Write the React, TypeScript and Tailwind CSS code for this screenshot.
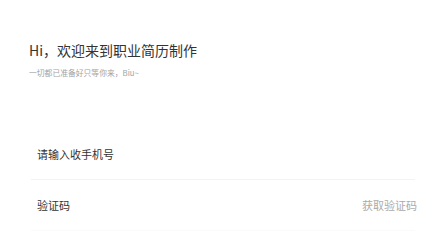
import React from "react";

const font = "font-['Noto_Sans_CJK_SC','Noto_Sans',sans-serif]";

export default function App() {
  return (
    <div className={`w-[445px] h-[248px] bg-white overflow-hidden ${font}`}>
      {/* HEADER */}
      <div className="pl-[29px] pt-[40px]">
        <h1 className="text-[14px] leading-[20px] text-[#333333] font-normal">
          Hi，欢迎来到职业简历制作
        </h1>
        <p className="mt-[8px] text-[7.8px] leading-[10px] text-[#a3a3a3]">
          一切都已准备好只等你来，Biu~
        </p>
      </div>

      {/* FORM */}
      <div className="mt-[51px] ml-[31px] w-[384px]">
        <div className="h-[51px] flex items-center px-[6px] border-b border-[#f3f3f3]">
          <span className="text-[11px] text-[#333333]">请输入收手机号</span>
        </div>
        <div className="h-[51px] flex items-center justify-between px-[6px] pr-[0px] border-b border-[#fafafa]">
          <span className="text-[11px] text-[#333333]">验证码</span>
          <span className="text-[11px] text-[#aaaaaa] mr-[-2px]">获取验证码</span>
        </div>
      </div>
    </div>
  );
}
